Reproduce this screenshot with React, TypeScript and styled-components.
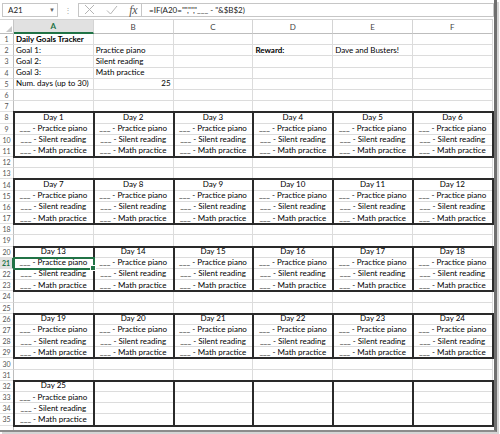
import React from 'react';
import styled, { createGlobalStyle } from 'styled-components';

const GlobalStyle = createGlobalStyle`
  html, body { margin: 0; padding: 0; background: #fff; }
  body { width: 500px; height: 434px; overflow: hidden; font-family: Lato, "Open Sans", sans-serif; }
  #root { width: 500px; height: 434px; }
`;

const ROW_H = 11.2;
const COL_W = 79.8;
const ROWS = 35;
const COLS = ['A', 'B', 'C', 'D', 'E', 'F'];
const GREEN = '#217346';

const Frame = styled.div`
  width: 494px;
  height: 430px;
  display: flex;
  flex-direction: column;
  border-right: 3px solid #6f6f6f;
  border-bottom: 2px solid #8c8c8c;
  box-shadow: 2px 2px 0 #d6d6d6;
  overflow: hidden;
  background: #fff;
`;

const FormulaBar = styled.div`
  height: 19px;
  flex-shrink: 0;
  display: flex;
  align-items: center;
  padding-left: 2px;
  box-sizing: border-box;
`;

const NameBox = styled.div`
  width: 56px;
  height: 14px;
  box-sizing: border-box;
  border: 1px solid #c6c6c6;
  display: flex;
  align-items: center;
  justify-content: space-between;
  padding: 0 2px 0 5px;
  font-size: 8px;
  color: #222;
`;

const Caret = styled.span`
  font-size: 6px;
  color: #666;
`;

const Dots = styled.span`
  width: 20px;
  text-align: center;
  font-size: 8px;
  color: #a8a8a8;
`;

const FxGroup = styled.div`
  width: 64px;
  height: 14px;
  box-sizing: border-box;
  border: 1px solid #c6c6c6;
  display: flex;
  align-items: center;
  justify-content: space-between;
  padding: 0 4px 0 5px;
`;

const Fx = styled.span`
  font-family: "Liberation Serif", "DejaVu Serif", serif;
  font-style: italic;
  font-size: 12px;
  color: #555;
  letter-spacing: -0.5px;
  line-height: 12px;
`;

const FormulaInput = styled.div`
  flex: 1;
  height: 14px;
  box-sizing: border-box;
  border: 1px solid #c6c6c6;
  border-left: none;
  display: flex;
  align-items: center;
  padding-left: 7px;
  font-size: 8px;
  color: #222;
  white-space: pre;
`;

const Sheet = styled.div`
  flex: 1;
  display: grid;
  grid-template-columns: 14px repeat(6, ${COL_W}px);
  grid-template-rows: 15px repeat(${ROWS}, ${ROW_H}px) 1fr;
  font-size: 8px;
  color: #000;
`;

const Corner = styled.div`
  grid-row: 1;
  grid-column: 1;
  box-sizing: border-box;
  border-top: 1px solid #d4d4d4;
  border-right: 1px solid #c6c6c6;
  border-bottom: 1px solid #bdbdbd;
  display: flex;
  align-items: flex-end;
  justify-content: flex-end;
  padding: 0 1px 1px 0;
`;

const ColHead = styled.div<{ $c: number; $sel?: boolean }>`
  grid-row: 1;
  grid-column: ${p => p.$c + 1};
  box-sizing: border-box;
  border-top: 1px solid #d4d4d4;
  border-right: 1px solid #d4d4d4;
  border-bottom: ${p => (p.$sel ? `2px solid ${GREEN}` : '1px solid #bdbdbd')};
  background: ${p => (p.$sel ? '#e1e1e1' : '#fff')};
  color: ${p => (p.$sel ? GREEN : '#444')};
  font-weight: ${p => (p.$sel ? 700 : 400)};
  display: flex;
  align-items: center;
  justify-content: center;
  font-size: 8px;
`;

const RowHead = styled.div<{ $r: number; $sel?: boolean }>`
  grid-row: ${p => p.$r + 1};
  grid-column: 1;
  box-sizing: border-box;
  border-right: ${p => (p.$sel ? `2px solid ${GREEN}` : '1px solid #bdbdbd')};
  border-bottom: 1px solid #e1e1e1;
  background: ${p => (p.$sel ? '#e1e1e1' : '#fff')};
  color: ${p => (p.$sel ? GREEN : '#555')};
  font-weight: ${p => (p.$sel ? 700 : 400)};
  display: flex;
  align-items: center;
  justify-content: center;
  font-size: 7px;
`;

const FillerHead = styled.div`
  grid-row: ${ROWS + 2};
  grid-column: 1;
  border-right: 1px solid #bdbdbd;
`;

const Cell = styled.div<{ $r: number; $c: number; $align?: string; $bold?: boolean }>`
  grid-row: ${p => p.$r + 1};
  grid-column: ${p => p.$c + 1};
  box-sizing: border-box;
  border-right: 1px solid #dcdcdc;
  border-bottom: 1px solid #dcdcdc;
  display: flex;
  align-items: center;
  justify-content: ${p => (p.$align === 'center' ? 'center' : p.$align === 'right' ? 'flex-end' : 'flex-start')};
  padding: 0 2px;
  white-space: nowrap;
  overflow: visible;
  font-weight: ${p => (p.$bold ? 700 : 400)};
  line-height: ${ROW_H}px;
  min-width: 0;
`;

const DayBox = styled.div<{ $r: number; $c: number }>`
  grid-row: ${p => p.$r + 1} / span 4;
  grid-column: ${p => p.$c + 1};
  margin: -1px;
  border: 2px solid #2a2a2a;
  pointer-events: none;
  z-index: 1;
`;

const Selection = styled.div<{ $r: number; $c: number }>`
  grid-row: ${p => p.$r + 1};
  grid-column: ${p => p.$c + 1};
  margin: -1px;
  border: 2px solid ${GREEN};
  position: relative;
  z-index: 2;
  pointer-events: none;
`;

const Handle = styled.span`
  position: absolute;
  right: -3px;
  bottom: -3px;
  width: 4px;
  height: 4px;
  background: ${GREEN};
  border: 1px solid #fff;
`;

type CellData = { text: string; align?: string; bold?: boolean };

const topData: Record<string, CellData> = {
  '1-1': { text: 'Daily Goals Tracker', bold: true },
  '2-1': { text: 'Goal 1:' },
  '2-2': { text: 'Practice piano' },
  '2-4': { text: 'Reward:', bold: true },
  '2-5': { text: 'Dave and Busters!' },
  '3-1': { text: 'Goal 2:' },
  '3-2': { text: 'Silent reading' },
  '4-1': { text: 'Goal 3:' },
  '4-2': { text: 'Math practice' },
  '5-1': { text: 'Num. days (up to 30)' },
  '5-2': { text: '25', align: 'right' },
};

const GROUP_STARTS = [8, 14, 20, 26, 32];
const GOALS = ['Practice piano', 'Silent reading', 'Math practice'];
const TOTAL_DAYS = 25;

function cellContent(r: number, c: number): CellData | null {
  const top = topData[`${r}-${c}`];
  if (top) return top;
  const g = GROUP_STARTS.findIndex(s => r >= s && r < s + 4);
  if (g < 0) return null;
  const day = g * 6 + c;
  if (day > TOTAL_DAYS) return null;
  const offset = r - GROUP_STARTS[g];
  if (offset === 0) return { text: `Day ${day}`, align: 'center' };
  return { text: `___ - ${GOALS[offset - 1]}`, align: 'center' };
}

const CrossIcon = () => (
  <svg width="11" height="11" viewBox="0 0 11 11">
    <path d="M1 1 L10 10 M10 1 L1 10" stroke="#b4b4b4" strokeWidth="1" fill="none" />
  </svg>
);

const CheckIcon = () => (
  <svg width="12" height="10" viewBox="0 0 12 10">
    <path d="M1 5.5 L4.5 9 L11 1" stroke="#b4b4b4" strokeWidth="1" fill="none" />
  </svg>
);

const CornerMark = () => (
  <svg width="6" height="6" viewBox="0 0 6 6">
    <path d="M6 0 L6 6 L0 6 Z" fill="#c8c8c8" />
  </svg>
);

export default function App() {
  const cells: React.ReactNode[] = [];
  for (let r = 1; r <= ROWS; r++) {
    cells.push(
      <RowHead key={`rh${r}`} $r={r} $sel={r === 21}>
        {r}
      </RowHead>
    );
    for (let c = 1; c <= 6; c++) {
      const d = cellContent(r, c);
      cells.push(
        <Cell key={`c${r}-${c}`} $r={r} $c={c} $align={d?.align} $bold={d?.bold}>
          {d?.text ?? ''}
        </Cell>
      );
    }
  }
  const boxes: React.ReactNode[] = [];
  GROUP_STARTS.forEach(s => {
    for (let c = 1; c <= 6; c++) boxes.push(<DayBox key={`b${s}-${c}`} $r={s} $c={c} />);
  });

  return (
    <>
      <GlobalStyle />
      <Frame>
        <FormulaBar>
          <NameBox>
            <span>A21</span>
            <Caret>▼</Caret>
          </NameBox>
          <Dots>⋮</Dots>
          <FxGroup>
            <CrossIcon />
            <CheckIcon />
            <Fx>fx</Fx>
          </FxGroup>
          <FormulaInput>{'=IF(A20="","","___ - "&$B$2)'}</FormulaInput>
        </FormulaBar>
        <Sheet>
          <Corner>
            <CornerMark />
          </Corner>
          {COLS.map((l, i) => (
            <ColHead key={l} $c={i + 1} $sel={l === 'A'}>
              {l}
            </ColHead>
          ))}
          {cells}
          <FillerHead />
          {boxes}
          <Selection $r={21} $c={1}>
            <Handle />
          </Selection>
        </Sheet>
      </Frame>
    </>
  );
}
